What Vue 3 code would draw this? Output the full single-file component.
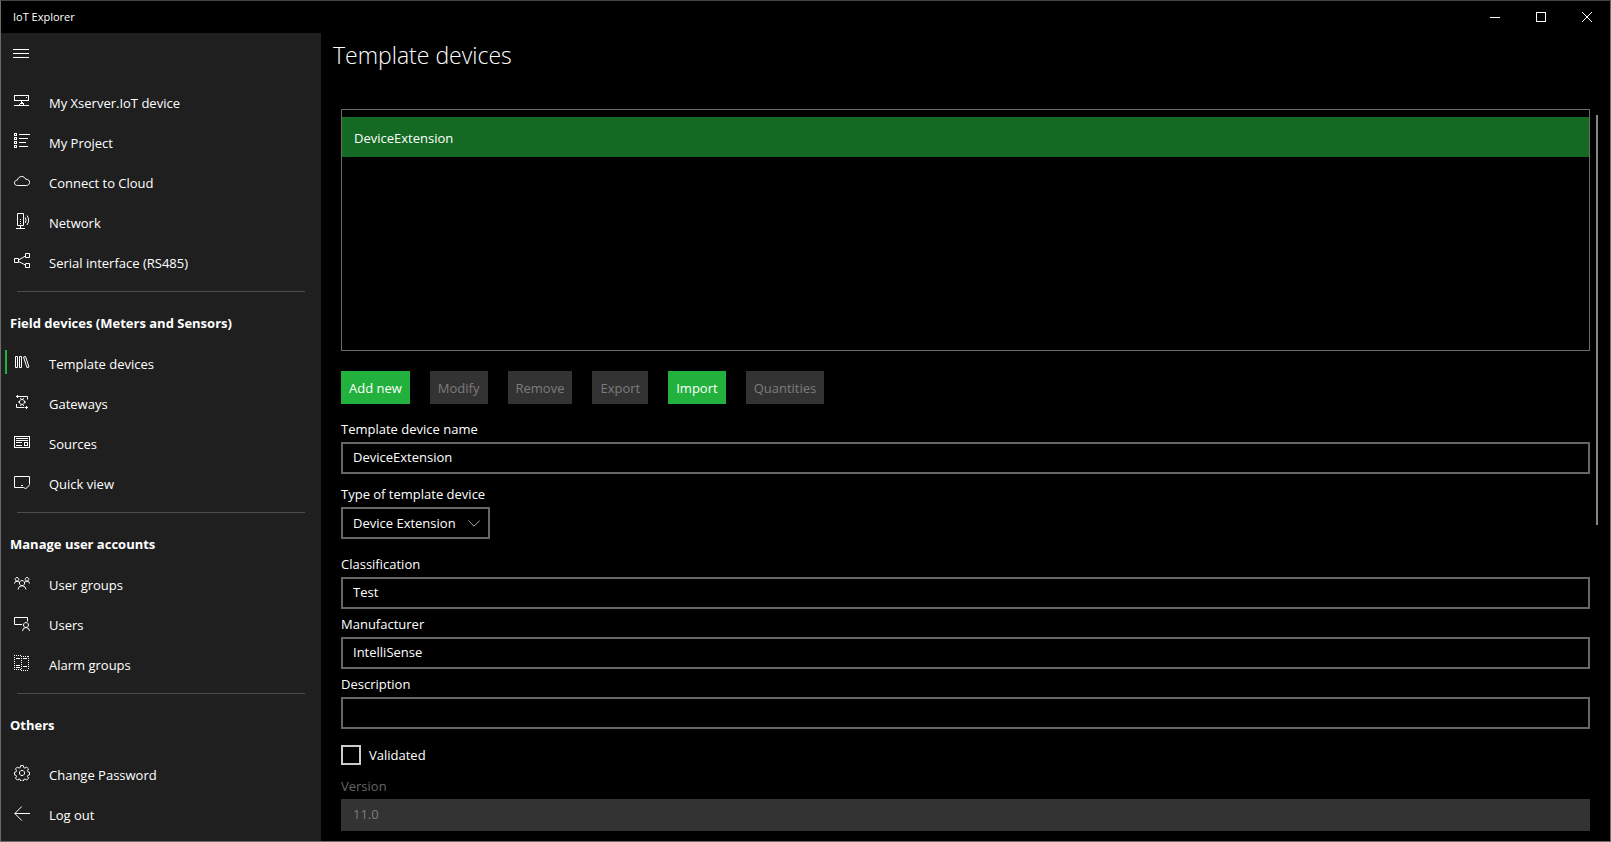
<script setup>
import { ref } from 'vue'

const groups = [
  {
    items: [
      { label: 'My Xserver.IoT device', icon: 'server' },
      { label: 'My Project', icon: 'list' },
      { label: 'Connect to Cloud', icon: 'cloud' },
      { label: 'Network', icon: 'network' },
      { label: 'Serial interface (RS485)', icon: 'share' },
    ],
  },
  {
    title: 'Field devices (Meters and Sensors)',
    items: [
      { label: 'Template devices', icon: 'library', active: true },
      { label: 'Gateways', icon: 'gateway' },
      { label: 'Sources', icon: 'sources' },
      { label: 'Quick view', icon: 'quick' },
    ],
  },
  {
    title: 'Manage user accounts',
    items: [
      { label: 'User groups', icon: 'groups' },
      { label: 'Users', icon: 'user' },
      { label: 'Alarm groups', icon: 'alarm' },
    ],
  },
  {
    title: 'Others',
    spaced: true,
    items: [
      { label: 'Change Password', icon: 'gear' },
      { label: 'Log out', icon: 'back' },
    ],
  },
]

const icons = {
  server: { crisp: true, d: 'M.5 2.5h14v5h-14zM12 4.5h1M7.5 7.5v2M6.5 9.5h2M0 12.5h5M10 12.5h5M5.5 10.5v2h4v-2h-4' },
  list: { crisp: true, d: 'M.5 .5h2v2h-2zM.5 4.5h2v2h-2zM.5 8.5h2v2h-2zM.5 12.5h2v2h-2zM5 1.5h11M5 5.5h9M5 9.5h7M5 13.5h9' },
  cloud: { d: 'M3.5 12.5C1.700 12.500 .5 11.400 .5 9.800C.5 8.200 1.700 7.200 3.400 7.100C3.900 5 5.600 3.500 7.700 3.500C9.700 3.500 11 4.600 11.600 6.200C14 6 15.500 7.300 15.500 9.300C15.500 11.200 14.200 12.500 12.300 12.500Z' },
  network: { d: 'M3.500 .5h6v12h-6zM6.500 12.500v3M2 15.500h9M6 6.500h1M6 8.500h1M6 10.500h1M11.200 4.500q1.800 2.500 0 5.500M13 2.500q3.200 4.500 0 9.500' },
  share: { d: 'M.5 5.500h4v4h-4zM11.500 .5h4v4h-4zM11.500 10.500h4v4h-4zM4.500 7l7-4M4.500 8.500l7 3.500' },
  library: { d: 'M1.500 2.500h2v11h-2zM5.500 2.500h2v11h-2zM9.500 3l2-.5 3.500 10.500-2 .6z' },
  gateway: { d: 'M5 2.500h8.500v3M3.500 1v3M2 2.500h3M2.500 10v3.500h8M12.500 12v3M11 13.500h3M8 5.500a2.500 2.500 0 1 0 .01 0zM6.500 4l.6 1.600M9.500 4l-.6 1.600M6.500 12l.6-1.600M9.500 12l-.6-1.600M4 8h1.500M10.500 8H12' },
  sources: { crisp: true, d: 'M.5 2.500h15v11h-15zM2 4.500h12M2 6.500h12M2 8.500h6M2 11.500h6M10.500 8.500h3v3h-3z' },
  quick: { d: 'M9.500 13.500h-9v-11h15v8M7 11.500h2M9.500 13l2 2 4-4' },
  groups: { d: 'M8 5.500a2.600 2.600 0 1 0 .01 0zM4 14.500q.5-3.800 4-3.800t4 3.800M3 2.500a1.800 1.800 0 1 0 .01 0zM.5 8.500Q.7 6.200 3 6.200q1.300 0 2 1M13 2.500a1.800 1.800 0 1 0 .01 0zM15.500 8.500q-.2-2.300-2.500-2.300-1.300 0-2 1' },
  user: { d: 'M8 9.500H.5v-7h13v4M12 7.500a2.500 2.500 0 1 0 .01 0zM8.500 16q.3-3.500 3.500-3.500t3.500 3.500' },
  alarm: { crisp: true, dots: 'M.5 0v15M0 .5h7M0 14.500h7M7.500 1v14M7 1.500h8M14.500 1v14M7 15.500h8', d: 'M2 3.500h4M2 10.500h4M2 12.500h4M9 3.500h4M9 11.500h4' },
  gear: { d: 'M6.700 .6h2.600l.5 2 1.100.5 1.800-1 1.800 1.800-1 1.800.4 1.100 1.600.5v2.600l-1.600.5-.4 1.100 1 1.700-1.800 1.800-1.800-1-1.100.5-.5 1.600H6.700l-.5-1.600-1.100-.5-1.800 1-1.800-1.800 1-1.700-.4-1.100L.5 9.900V7.300l1.600-.5.4-1.100-1-1.800 1.800-1.800 1.800 1 1.100-.5zM8 5.400a2.600 2.600 0 1 0 .01 0z' },
  back: { d: 'M16 8.500H.8M7.800 1.500l-7 7 7 7' },
}

const actions = [
  { label: 'Add new', on: true },
  { label: 'Modify' },
  { label: 'Remove' },
  { label: 'Export' },
  { label: 'Import', on: true },
  { label: 'Quantities' },
]

const name = ref('DeviceExtension')
const type = ref('Device Extension')
const classification = ref('Test')
const manufacturer = ref('IntelliSense')
const description = ref('')
const validated = ref(false)
const version = ref('11.0')
</script>

<template>
  <div class="window">
    <header class="titlebar">
      <span class="app-name">IoT Explorer</span>
      <button class="caption" aria-label="Minimize">
        <svg width="10" height="10" viewBox="0 0 10 10"><path shape-rendering="crispEdges" d="M0 5.500h10" /></svg>
      </button>
      <button class="caption" aria-label="Maximize">
        <svg width="10" height="10" viewBox="0 0 10 10"><path shape-rendering="crispEdges" d="M.5 .5h9v9h-9z" /></svg>
      </button>
      <button class="caption" aria-label="Close">
        <svg width="10" height="10" viewBox="0 0 10 10"><path d="M0 0l10 10M10 0L0 10" /></svg>
      </button>
    </header>

    <div class="body">
      <nav class="sidebar">
        <button class="menu" aria-label="Menu">
          <svg width="16" height="10" viewBox="0 0 16 10"><path shape-rendering="crispEdges" d="M0 .5h16M0 4.500h16M0 8.500h16" /></svg>
        </button>
        <section v-for="(group, i) in groups" :key="i" :class="['group', { spaced: group.spaced }]">
          <hr v-if="i > 0" />
          <h2 v-if="group.title">{{ group.title }}</h2>
          <ul>
            <li v-for="item in group.items" :key="item.label">
              <a href="#" :class="['item', { active: item.active }]">
                <svg width="16" height="16" viewBox="0 0 16 16">
                  <path v-if="icons[item.icon].dots" :d="icons[item.icon].dots" stroke-dasharray="1 1" shape-rendering="crispEdges" />
                  <path :d="icons[item.icon].d" :shape-rendering="icons[item.icon].crisp ? 'crispEdges' : 'auto'" />
                </svg>
                <span>{{ item.label }}</span>
              </a>
            </li>
          </ul>
        </section>
      </nav>

      <main class="main">
        <h1>Template devices</h1>
        <div class="scroller">
          <div class="content">
            <ul class="device-list">
              <li class="selected">DeviceExtension</li>
            </ul>

            <div class="actions">
              <button v-for="a in actions" :key="a.label" :disabled="!a.on">{{ a.label }}</button>
            </div>

            <div class="field wide-gap">
              <label for="name">Template device name</label>
              <input id="name" v-model="name" type="text" />
            </div>
            <div class="field mid-gap">
              <label for="type">Type of template device</label>
              <div class="select">
                <select id="type" v-model="type">
                  <option>Device Extension</option>
                </select>
                <svg width="12" height="7" viewBox="0 0 12 7"><path d="M.3 .5L6 6.200L11.700 .5" /></svg>
              </div>
            </div>
            <div class="field wide-gap">
              <label for="classification">Classification</label>
              <input id="classification" v-model="classification" type="text" />
            </div>
            <div class="field">
              <label for="manufacturer">Manufacturer</label>
              <input id="manufacturer" v-model="manufacturer" type="text" />
            </div>
            <div class="field">
              <label for="description">Description</label>
              <input id="description" v-model="description" type="text" />
            </div>
            <div class="check">
              <input id="validated" v-model="validated" type="checkbox" />
              <label for="validated">Validated</label>
            </div>
            <div class="field off">
              <label for="version">Version</label>
              <input id="version" v-model="version" type="text" disabled />
            </div>
          </div>
          <div class="track"><div class="thumb"></div></div>
        </div>
      </main>
    </div>
  </div>
</template>

<style>
body {
  background: #000;
}
</style>

<style scoped>
* {
  box-sizing: border-box;
}
.window {
  display: flex;
  flex-direction: column;
  min-height: 100vh;
  border: 1px solid #6b6b6b;
  border-top-color: #454545;
  background: #000;
  color: #fff;
  font-family: "Open Sans", "Noto Sans", sans-serif;
  font-size: 13px;
  line-height: 20px;
}
button, input, select {
  font: inherit;
  color: inherit;
  border: 0;
  border-radius: 0;
  margin: 0;
}
ul {
  list-style: none;
  margin: 0;
  padding: 0;
}
svg {
  display: block;
  flex: none;
  fill: none;
  stroke: #fff;
  stroke-width: 1;
}
.titlebar {
  display: flex;
  align-items: center;
  height: 32px;
}
.app-name {
  flex: 1;
  padding-left: 12px;
  font-size: 11px;
}
.caption {
  display: flex;
  align-items: center;
  justify-content: center;
  width: 46px;
  height: 32px;
  padding: 0;
  background: none;
}
.body {
  display: flex;
  flex: 1;
}
.sidebar {
  flex: none;
  width: 320px;
  background: #1f1f1f;
}
.menu {
  display: flex;
  align-items: center;
  width: 48px;
  height: 41px;
  padding: 0 12px;
  margin-bottom: 8px;
  background: none;
}
hr {
  height: 1px;
  margin: 9px 16px 11px;
  border: 0;
  background: #4c4c4c;
}
h2 {
  margin: 0;
  padding-left: 9px;
  font-size: 13px;
  font-weight: 700;
  line-height: 40px;
}
.spaced ul {
  padding-top: 9px;
}
.item {
  position: relative;
  display: flex;
  align-items: center;
  gap: 19px;
  height: 40px;
  padding-left: 13px;
  color: #fff;
  text-decoration: none;
}
.item svg {
  margin-bottom: 2px;
}
.item span {
  padding-top: 2px;
}
.item.active::before {
  content: "";
  position: absolute;
  left: 4px;
  top: 7px;
  width: 2px;
  height: 24px;
  background: #22b13c;
}
.main {
  display: flex;
  flex: 1;
  flex-direction: column;
  min-width: 0;
}
h1 {
  margin: 0 0 34px;
  padding: 2px 0 0 12px;
  font-size: 23px;
  font-weight: 300;
  line-height: 40px;
}
.scroller {
  display: flex;
  flex: 1;
}
.content {
  flex: 1;
  padding: 0 0 9px 20px;
}
.track {
  position: relative;
  width: 20px;
}
.thumb {
  position: absolute;
  top: 6px;
  left: 6px;
  width: 2px;
  height: 56%;
  background: #858585;
}
.device-list {
  height: 242px;
  padding-top: 7px;
  border: 1px solid #6b6b6b;
}
.device-list li {
  padding: 11px 12px 9px;
}
.selected {
  background: #146a22;
}
.actions {
  display: flex;
  gap: 20px;
  margin-top: 20px;
}
.actions button {
  height: 33px;
  padding: 1px 8px 0;
  background: #22b13c;
}
.actions button:disabled {
  background: #333;
  color: #7c7c7c;
}
.field {
  display: flex;
  flex-direction: column;
  gap: 3px;
  margin-top: 5px;
}
.field.mid-gap {
  margin-top: 10px;
}
.field.wide-gap {
  margin-top: 15px;
}
.field.off {
  margin-top: 11px;
}
.field input,
.select select {
  width: 100%;
  height: 32px;
  padding: 0 10px 2px;
  border: 2px solid #666;
  background: #000;
}
.select {
  position: relative;
  align-self: flex-start;
}
.select select {
  display: block;
  appearance: none;
  padding: 0 32px 0 10px;
}
.select svg {
  position: absolute;
  top: 13px;
  right: 10px;
  stroke: #aaa;
  pointer-events: none;
}
.check {
  display: flex;
  gap: 8px;
  margin-top: 16px;
}
.check input {
  appearance: none;
  width: 20px;
  height: 20px;
  border: 2px solid #ccc;
}
.check input:checked {
  background: #22b13c;
}
.off label {
  color: #666;
}
.field input:disabled {
  border-color: #333;
  background: #333;
  color: #7c7c7c;
}
</style>
